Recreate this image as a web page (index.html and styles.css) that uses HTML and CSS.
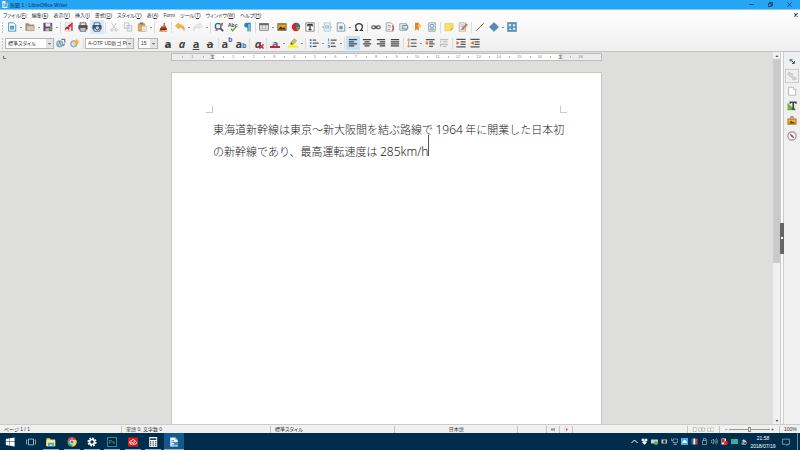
FILE: index.html
```
<!DOCTYPE html>
<html lang="ja">
  <head>
    <meta charset="utf-8" />
    <title>無題 1 - LibreOffice Writer</title>
    <link rel="stylesheet" href="styles.css" />
  </head>
  <body>
    <header class="titlebar">
      <svg class="app-icon" viewBox="0 0 12 12"><path d="M2 0h6l3 3v9H2z" fill="#e8f4fb" /><path d="M8 0l3 3H8z" fill="#17587f" /><path d="M3 5h7M3 7h3M3 9h7" stroke="#1c6ea4" /><path d="M7 6h3v2H7z" fill="#2a87b8" /></svg>
      <h1>無題 1 - LibreOffice Writer</h1>
      <div class="window-buttons">
        <button aria-label="最小化"><svg viewBox="0 0 12 12"><path d="M1 6h10" /></svg></button>
        <button aria-label="元に戻す"><svg viewBox="0 0 12 12"><path d="M1 4h7v7H1zM4 4V1h7v7H8" /></svg></button>
        <button aria-label="閉じる"><svg viewBox="0 0 12 12"><path d="M1 1l10 10M11 1L1 11" /></svg></button>
      </div>
    </header>

    <div class="chrome">
      <nav class="menubar">
        <a href="#">ファイル(<u>F</u>)</a>
        <a href="#">編集(<u>E</u>)</a>
        <a href="#">表示(<u>V</u>)</a>
        <a href="#">挿入(<u>I</u>)</a>
        <a href="#">書式(<u>O</u>)</a>
        <a href="#">スタイル(<u>Y</u>)</a>
        <a href="#">表(<u>A</u>)</a>
        <a href="#">Form</a>
        <a href="#">ツール(<u>T</u>)</a>
        <a href="#">ウィンドウ(<u>W</u>)</a>
        <a href="#">ヘルプ(<u>H</u>)</a>
        <button class="close-doc" aria-label="文書を閉じる"><svg viewBox="0 0 10 10"><path d="M1 1l8 8M9 1L1 9" stroke="#444" stroke-width="3" /></svg></button>
      </nav>

      <div class="toolbar">
        <span class="handle"></span>
        <button class="tool" aria-label="新規"><svg viewBox="0 0 24 24"><path d="M4 2h12l5 5v15H4z" fill="#fff" stroke="#2a87b8" stroke-width="2" /><path d="M7 9h10v9H7z" fill="#3592c4" /><path d="M8 12h5M8 15h8" stroke="#fff" /></svg></button>
        <button class="drop" aria-label="新規メニュー"></button>
        <button class="tool" aria-label="開く"><svg viewBox="0 0 24 24"><path d="M1 21V3h8l2 3h11v15z" fill="#9c8b75" /><path d="M4 21V9h18v12z" fill="#dac7aa" stroke="#93816b" /></svg></button>
        <button class="drop" aria-label="開くメニュー"></button>
        <button class="tool" aria-label="保存"><svg viewBox="0 0 24 24"><path d="M1 2h21v20H1z" fill="#64456f" /><path d="M6 3h12v8H6z" fill="#ece5ef" /><path d="M6 15h9v7H6z" fill="#c3b5c9" /><path d="M14 15h3v-5h4v5h3l-5 6z" fill="#6cbb35" /></svg></button>
        <button class="drop" aria-label="保存メニュー"></button>
        <span class="sep"></span>
        <button class="tool" aria-label="PDF"><svg viewBox="0 0 24 24"><path d="M3 2h17v20H3z" fill="#f6f6f6" stroke="#aaa" /><path d="M21 1L9 9l6 4zM2 20c0-8 5-10 10-10 2 4 1 8 0 12-1-6-5-7-10-2z" fill="#cc2229" /><path d="M19 2v19" stroke="#cc2229" stroke-width="3" /></svg></button>
        <button class="tool" aria-label="印刷"><svg viewBox="0 0 24 24"><path d="M5 2h14v6H5z" fill="#fff" stroke="#444" stroke-width="2" /><rect x="1" y="7" width="22" height="11" rx="2" fill="#555" /><path d="M5 13h14v9H5z" fill="#f2f2f2" stroke="#444" stroke-width="2" /><path d="M7 17h10" stroke="#777" stroke-width="2" /></svg></button>
        <button class="tool hovered" aria-label="印刷プレビュー"><svg viewBox="0 0 24 24"><path d="M5 2h14v6H5z" fill="#fff" stroke="#31465c" stroke-width="2" /><rect x="1" y="7" width="22" height="11" rx="2" fill="#40536a" /><path d="M5 13h14v9H5z" fill="#fff" stroke="#31465c" stroke-width="2" /><circle cx="13" cy="14" r="5" fill="#aed7f2" stroke="#2c4054" stroke-width="2" /></svg></button>
        <span class="sep"></span>
        <button class="tool faded" aria-label="切り取り"><svg viewBox="0 0 24 24"><path d="M6 2l9 14M18 2L9 16" stroke="#888" stroke-width="2" /><circle cx="7" cy="19" r="3" fill="none" stroke="#888" stroke-width="2" /><circle cx="17" cy="19" r="3" fill="none" stroke="#888" stroke-width="2" /></svg></button>
        <button class="tool faded" aria-label="コピー"><svg viewBox="0 0 24 24"><path d="M3 2h11v13H3zM10 8h11v14H10z" fill="#eee" stroke="#888" stroke-width="2" /><path d="M13 13h6M13 17h6" stroke="#888" /></svg></button>
        <button class="tool" aria-label="貼り付け"><svg viewBox="0 0 24 24"><path d="M3 4h16v18H3z" fill="#dfa653" stroke="#b77b31" /><path d="M7 1h8v5H7z" fill="#777" /><path d="M11 10h11v12H11z" fill="#fff" stroke="#888" /><path d="M13 14h7M13 18h7" stroke="#999" /></svg></button>
        <button class="drop" aria-label="貼り付けメニュー"></button>
        <span class="sep"></span>
        <button class="tool" aria-label="書式のコピー"><svg viewBox="0 0 24 24"><path d="M13 2h4v9h-4z" fill="#b57a50" /><path d="M8 10h11l2 6H6z" fill="#bb4734" /><path d="M5 15h16v4l-17 2z" fill="#7e2519" /><path d="M3 22h19" stroke="#e69832" stroke-width="3" /></svg></button>
        <span class="sep"></span>
        <button class="tool" aria-label="元に戻す"><svg viewBox="0 0 24 24"><path d="M1 9l8-7v4c10 0 15 5 13 15-2-6-6-8-13-8v4z" fill="#f0b849" stroke="#d2902d" /></svg></button>
        <button class="drop" aria-label="履歴"></button>
        <button class="tool faded" aria-label="やり直し"><svg viewBox="0 0 24 24"><path d="M23 9l-8-7v4C5 6 0 11 2 21c2-6 6-8 13-8v4z" fill="#ddd" stroke="#999" /></svg></button>
        <button class="drop" aria-label="やり直し履歴"></button>
        <span class="sep"></span>
        <button class="tool" aria-label="検索と置換"><svg viewBox="0 0 24 24"><circle cx="10" cy="10" r="7" fill="#dceefb" stroke="#356b94" stroke-width="3" /><path d="M15 15l7 7" stroke="#444" stroke-width="4" /><path d="M14 4l8-2-2 8" fill="#d95534" /><path d="M3 22l2-6 5 4z" fill="#d95534" /></svg></button>
        <button class="tool" aria-label="スペルチェック"><svg viewBox="0 0 24 24"><text x="0" y="11" class="icon-abc">Abc</text><path d="M7 16l4 5 9-10" fill="none" stroke="#539d38" stroke-width="3" /></svg></button>
        <button class="tool" aria-label="編集記号"><svg viewBox="0 0 24 24"><path d="M12 2a6 5 0 0 0 0 11h1v10h3V5h2v18h3V2z" fill="#2684bc" /></svg></button>
        <span class="sep"></span>
        <button class="tool" aria-label="表"><svg viewBox="0 0 24 24"><path d="M1 4h22v16H1z" fill="#fff" stroke="#777" stroke-width="2" /><path d="M1 3h22v5H1z" fill="#666" /><path d="M8 4v16M16 4v16M1 12h22M1 16h22" stroke="#777" /></svg></button>
        <button class="drop" aria-label="表メニュー"></button>
        <button class="tool" aria-label="画像"><svg viewBox="0 0 24 24"><path d="M1 3h22v18H1z" fill="#765a27" /><path d="M3 6h18v12H3z" fill="#e4a52c" /><path d="M3 18l6-8 5 5 3-3 4 6z" fill="#3e3620" /></svg></button>
        <button class="tool" aria-label="グラフ"><svg viewBox="0 0 24 24"><circle cx="12" cy="12" r="10" fill="#d6202b" /><path d="M12 12V2a10 10 0 0 1 10 10z" fill="#3e6d9b" /><path d="M12 12h10a10 10 0 0 1-7 9z" fill="#69a541" /></svg></button>
        <button class="tool" aria-label="テキストボックス"><svg viewBox="0 0 24 24"><path d="M2 2h20v20H2z" fill="#fff" stroke="#777" stroke-width="2" /><path d="M6 5h12v5h-2V8h-3v9h2v2H9v-2h2V8H8v2H6z" fill="#333" stroke="#333" /></svg></button>
        <span class="sep"></span>
        <button class="tool" aria-label="改ページ"><svg viewBox="0 0 24 24"><path d="M5 2h15v7H5zM5 15h15v7H5z" fill="#e7f1f8" stroke="#7d9caf" /><path d="M1 12h22" stroke="#2c83b9" stroke-width="2" stroke-dasharray="4 2" /></svg></button>
        <button class="tool" aria-label="フィールド"><svg viewBox="0 0 24 24"><path d="M3 2h13l5 5v15H3z" fill="#f5f7f8" stroke="#7e8c96" stroke-width="2" /><path d="M8 10h8v7H8z" fill="#5d9abd" /><path d="M10 8v11M14 8v11" stroke="#5d9abd" /></svg></button>
        <button class="drop" aria-label="フィールドメニュー"></button>
        <button class="tool" aria-label="特殊文字"><svg viewBox="0 0 24 24"><path d="M2 20h6C1 13 3 4 12 4s11 9 4 16h6" fill="none" stroke="#333" stroke-width="3" /></svg></button>
        <span class="sep"></span>
        <button class="tool" aria-label="ハイパーリンク"><svg viewBox="0 0 24 24"><rect x="2" y="9" width="9" height="7" rx="3" fill="none" stroke="#666" stroke-width="3" /><rect x="13" y="9" width="9" height="7" rx="3" fill="none" stroke="#666" stroke-width="3" /><path d="M8 12h8" stroke="#333" stroke-width="2" /></svg></button>
        <button class="tool" aria-label="脚注"><svg viewBox="0 0 24 24"><path d="M3 2h12l5 5v15H3z" fill="#fafafa" stroke="#8f979c" stroke-width="2" /><path d="M6 8h8M6 12h9M6 18h6" stroke="#999" stroke-width="2" /><path d="M17 9c4 2 4 8 0 11" fill="none" stroke="#d33b36" stroke-width="3" /></svg></button>
        <button class="tool" aria-label="文末脚注"><svg viewBox="0 0 24 24"><path d="M2 4h16v16H2z" fill="#fafafa" stroke="#8f979c" stroke-width="2" /><path d="M9 8h12v9H9z" fill="#d5e4ee" stroke="#4d7895" stroke-width="2" /><path d="M4 8h4M4 12h4M4 16h4" stroke="#888" /></svg></button>
        <button class="tool" aria-label="ブックマーク"><svg viewBox="0 0 24 24"><path d="M5 2h9v19l-5-4-4 4z" fill="#e97a20" /><path d="M15 3l2 4h5l-4 3 1 5-4-3-5 3 2-5-4-3h5z" fill="#f5bd45" /></svg></button>
        <button class="tool" aria-label="相互参照"><svg viewBox="0 0 24 24"><path d="M4 2h16v20H4z" fill="#eef2f5" stroke="#8a9aa6" stroke-width="2" /><path d="M8 6h8v6H8zM8 15h8v4H8z" fill="#fff" stroke="#6f94ae" stroke-width="2" /></svg></button>
        <span class="sep"></span>
        <button class="tool" aria-label="コメント"><svg viewBox="0 0 24 24"><path d="M2 3h20v12l-6 6H2z" fill="#f9df66" stroke="#d6b93d" /><path d="M22 15h-6v6z" fill="#c7a72d" /></svg></button>
        <button class="tool" aria-label="変更の記録"><svg viewBox="0 0 24 24"><path d="M3 2h15v20H3z" fill="#f7f7f7" stroke="#aaa" stroke-width="2" /><path d="M6 7h9M6 11h7M6 18h10" stroke="#aaa" stroke-width="2" /><path d="M9 18l2-5L20 4l3 3-9 9z" fill="#e17650" stroke="#96543e" /></svg></button>
        <span class="sep"></span>
        <button class="tool" aria-label="線"><svg viewBox="0 0 24 24"><path d="M3 21L21 3" stroke="#555" stroke-width="2" /></svg></button>
        <button class="tool" aria-label="図形"><svg viewBox="0 0 24 24"><path d="M12 1l11 11-11 11L1 12z" fill="#4d8cc1" stroke="#2c689c" /></svg></button>
        <button class="drop" aria-label="図形メニュー"></button>
        <button class="tool" aria-label="描画機能"><svg viewBox="0 0 24 24"><path d="M1 1h22v22H1z" fill="#5c91bb" stroke="#35719f" /><path d="M4 5h6v5H4zM14 14h6v5h-6z" fill="#cae1f2" /><circle cx="17" cy="8" r="3" fill="#cae1f2" /><path d="M4 19l3-6 4 6z" fill="#cae1f2" /></svg></button>
      </div>

      <div class="toolbar">
        <span class="handle"></span>
        <select class="combo" aria-label="段落スタイル"><option>標準スタイル</option></select>
        <button class="tool" aria-label="スタイルの更新"><svg viewBox="0 0 24 24"><circle cx="9" cy="14" r="7" fill="#cfe0ea" stroke="#7da3bb" stroke-width="3" /><path d="M6 18l3-9 3 9" fill="none" stroke="#4d8bb2" stroke-width="2" /><path d="M13 3h8v8M21 14l-5 5" fill="none" stroke="#777" stroke-width="3" /></svg></button>
        <button class="tool" aria-label="新規スタイル"><svg viewBox="0 0 24 24"><circle cx="9" cy="14" r="7" fill="#cfe0ea" stroke="#8baabc" stroke-width="3" /><path d="M16 1l2 5 5 1-4 4 1 5-5-3-4 3 1-6-4-3 6-1z" fill="#f2b42f" /></svg></button>
        <span class="sep"></span>
        <select class="combo" aria-label="フォント名"><option>A-OTF UD新ゴ Pr6N</option></select>
        <select class="combo size" aria-label="フォントサイズ"><option>15</option></select>
        <button class="tool letter" aria-label="太字"><b>a</b></button>
        <button class="tool letter" aria-label="斜体"><i>a</i></button>
        <button class="tool letter" aria-label="下線"><u>a</u></button>
        <button class="tool letter" aria-label="取り消し線"><s>a</s></button>
        <span class="sep"></span>
        <button class="tool letter" aria-label="上付き">a<sup>b</sup></button>
        <button class="tool letter" aria-label="下付き">a<sub>b</sub></button>
        <span class="sep"></span>
        <button class="tool letter" aria-label="書式のクリア"><i>a</i><svg class="clear-mark" viewBox="0 0 10 10"><path d="M1 1l8 8M9 1L1 9" stroke="#d8232a" stroke-width="3" /></svg></button>
        <span class="sep"></span>
        <button class="tool letter font-color" aria-label="フォントの色">a</button>
        <button class="drop" aria-label="フォントの色メニュー"></button>
        <button class="tool" aria-label="ハイライト"><svg viewBox="0 0 24 24"><path d="M7 11l8-9 6 4-8 9-5 2z" fill="#d7bf36" stroke="#777" /><path d="M5 15l3-4 4 4z" fill="#444" /><path d="M0 18h24v5H0z" fill="#fff000" /></svg></button>
        <button class="drop" aria-label="ハイライトメニュー"></button>
        <span class="sep"></span>
        <button class="tool" aria-label="箇条書き"><svg viewBox="0 0 24 24"><path d="M9 5h8M9 12h14M9 20h9" stroke="#555" stroke-width="3" /><path d="M2 5h4M2 12h4M2 20h4" stroke="#3779a5" stroke-width="4" /></svg></button>
        <button class="drop" aria-label="箇条書きメニュー"></button>
        <button class="tool" aria-label="番号付け"><svg viewBox="0 0 24 24"><path d="M9 5h14M9 12h10M9 20h12" stroke="#555" stroke-width="3" /><path d="M4 1v7M2 12h4M2 18h4v4H2" fill="none" stroke="#3779a5" stroke-width="2" /></svg></button>
        <button class="drop" aria-label="番号付けメニュー"></button>
        <span class="sep"></span>
        <button class="tool active" aria-label="左揃え"><svg viewBox="0 0 24 24"><path d="M2 4h20M2 9h13M2 14h20M2 19h13" stroke="#444" stroke-width="3" /></svg></button>
        <button class="tool" aria-label="中央揃え"><svg viewBox="0 0 24 24"><path d="M2 4h20M6 9h12M2 14h20M6 19h12" stroke="#444" stroke-width="3" /></svg></button>
        <button class="tool" aria-label="右揃え"><svg viewBox="0 0 24 24"><path d="M2 4h20M9 9h13M2 14h20M9 19h13" stroke="#444" stroke-width="3" /></svg></button>
        <button class="tool" aria-label="両端揃え"><svg viewBox="0 0 24 24"><path d="M2 4h20M2 9h20M2 14h20M2 19h20" stroke="#444" stroke-width="3" /></svg></button>
        <span class="sep"></span>
        <button class="tool" aria-label="行間"><svg viewBox="0 0 24 24"><path d="M9 4h14M9 12h14M9 20h14" stroke="#666" stroke-width="3" /><path d="M4 2v20M1 6l3-4 3 4M1 18l3 4 3-4" fill="none" stroke="#d9823d" stroke-width="2" /></svg></button>
        <button class="drop" aria-label="行間メニュー"></button>
        <button class="tool" aria-label="段落間隔を広げる"><svg viewBox="0 0 24 24"><path d="M2 4h21M10 9h9M10 14h13M10 20h9" stroke="#555" stroke-width="3" /><path d="M1 12h7M5 8v8" stroke="#dc7934" stroke-width="3" /></svg></button>
        <button class="tool faded" aria-label="段落間隔を狭める"><svg viewBox="0 0 24 24"><path d="M2 4h20M10 9h10M2 15h20M10 20h8M4 7v4M4 17v4" stroke="#888" stroke-width="3" /></svg></button>
        <span class="sep"></span>
        <button class="tool" aria-label="インデントを増やす"><svg viewBox="0 0 24 24"><path d="M1 3h22M11 9h12M11 15h12M1 21h22" stroke="#555" stroke-width="3" /><path d="M1 7l8 5-8 5z" fill="#e36b25" /></svg></button>
        <button class="tool" aria-label="インデントを減らす"><svg viewBox="0 0 24 24"><path d="M1 3h22M11 9h12M11 15h12M1 21h22" stroke="#555" stroke-width="3" /><path d="M9 7l-8 5 8 5z" fill="#e36b25" /></svg></button>
      </div>
    </div>

    <main class="workspace">
      <section class="document">
        <div class="ruler-row">
          <span class="tab-stop"></span>
          <div class="ruler">
            <span>1</span><span class="marker"></span><span>1</span><span>2</span><span>3</span><span>4</span><span>5</span><span>6</span><span>7</span><span>8</span><span>9</span><span>10</span><span>11</span><span>12</span><span>13</span><span>14</span><span>15</span><span>16</span><span class="marker"></span><span>18</span>
          </div>
        </div>
        <article class="page">
          <div class="page-corners"><span></span><span></span></div>
          <p>東海道新幹線は東京～新大阪間を結ぶ路線で <span class="latin">1964</span> 年に開業した日本初<br />の新幹線であり、最高運転速度は <span class="latin">285km/h</span><span class="caret"></span></p>
        </article>
      </section>

      <div class="scrollbar">
        <button aria-label="上へ"><svg viewBox="0 0 8 8"><path d="M1 6l3-4 3 4z" /></svg></button>
        <div class="track"><div class="thumb"></div></div>
        <button aria-label="下へ"><svg viewBox="0 0 8 8"><path d="M1 2l3 4 3-4z" /></svg></button>
      </div>

      <div class="splitter"><button aria-label="サイドバーを隠す"></button></div>

      <aside class="sidebar">
        <button class="tab menu" aria-label="設定"><svg viewBox="0 0 24 24"><path d="M6 7h7v6H6z" fill="#6e8191" /><path d="M12 12l5 5M18 12v6h-6" fill="none" stroke="#394e62" stroke-width="2" /></svg></button>
        <button class="tab selected" aria-label="プロパティ"><svg viewBox="0 0 24 24"><path d="M2 6c0-3 3-4 5-3v4l3 1 2-3c2 3 1 5 0 6l5 4c3-1 6 2 5 5l-4-1-1 3c-3 0-4-3-4-5l-6-5c-3 0-5-3-5-6z" fill="#ddd" stroke="#999" /></svg></button>
        <button class="tab" aria-label="ページ"><svg viewBox="0 0 24 24"><path d="M4 3h11l6 6v13H4z" fill="#fff" stroke="#aaa" stroke-width="2" /><path d="M15 3v6h6" fill="#ddd" stroke="#aaa" /></svg></button>
        <button class="tab" aria-label="スタイル"><svg viewBox="0 0 24 24"><path d="M1 4v18h20z" fill="#6eb944" /><path d="M6 1h17v6h-3V5h-3v13h3v3h-9v-3h2V5H9v2H6z" fill="#444" /></svg></button>
        <button class="tab" aria-label="ギャラリー"><svg viewBox="0 0 24 24"><path d="M9 6V2h6v4" fill="none" stroke="#555" stroke-width="2" /><path d="M1 6h22v15H1z" fill="#c47e16" /><path d="M4 9h16v9H4z" fill="#eeb93b" /><path d="M5 18l5-7 4 4 2-2 3 5z" fill="#544a2c" /></svg></button>
        <button class="tab" aria-label="ナビゲーター"><svg viewBox="0 0 24 24"><circle cx="12" cy="12" r="10" fill="#f8f8f8" stroke="#999" stroke-width="3" /><path d="M6 6l8 4-4 4z" fill="#cf3b3f" /><path d="M18 18l-8-4 4-4z" fill="#47698e" /></svg></button>
      </aside>
    </main>

    <footer class="statusbar">
      <span class="pages">ページ 1 / 1</span>
      <span class="words">単語 0, 文字数 0</span>
      <span class="style">標準スタイル</span>
      <span class="language">日本語</span>
      <span class="insert"></span>
      <span class="selection"><svg viewBox="0 0 12 12"><path d="M0 3h8v6H0z" fill="#888" /><path d="M10 1v10" stroke="#666" stroke-width="2" /></svg></span>
      <span class="signature"><svg viewBox="0 0 12 12"><path d="M1 1h7v10H1z" fill="#fff" stroke="#aaa" /><circle cx="8" cy="6" r="3" fill="#c9505f" /></svg></span>
      <span class="info"></span>
      <span class="views">
        <svg viewBox="0 0 12 12"><path d="M3 1h7v10H3z" fill="#fff" stroke="#777" /></svg>
        <svg viewBox="0 0 18 12"><path d="M2 2h6v8H2zM10 2h6v8h-6z" fill="#fff" stroke="#777" /></svg>
        <svg viewBox="0 0 18 12"><path d="M1 3l4-1 4 1 4-1 4 1v7H1zM9 3v7" fill="#fff" stroke="#777" /></svg>
      </span>
      <span class="zoom"><button aria-label="縮小">−</button><input type="range" min="20" max="180" value="100" aria-label="ズーム" /><button aria-label="拡大">+</button></span>
      <span class="percent">100%</span>
    </footer>

    <div class="taskbar">
      <div class="apps">
        <button aria-label="スタート"><svg viewBox="0 0 24 24"><path d="M2 5l9-2v8H2zM12 3l11-2v10H12zM2 12h9v9l-9-2zM12 12h11v11l-11-2z" fill="#fff" /></svg></button>
        <button aria-label="タスクビュー"><svg viewBox="0 0 24 24"><path d="M6 5h12v14H6zM3 7H1v10h2M21 7h2v10h-2" fill="none" stroke="#b5c4cf" stroke-width="2" /></svg></button>
        <button class="running" aria-label="エクスプローラー"><svg viewBox="0 0 24 24"><path d="M1 3h8l2 3h11v16H1z" fill="#f4cf62" /><path d="M1 8h21v14H1z" fill="#ffe89b" /><path d="M5 22v-8h14v8h-4v-4H9v4z" fill="#3ba2db" /></svg></button>
        <button class="running" aria-label="Chrome"><svg viewBox="0 0 24 24"><circle cx="12" cy="12" r="11" fill="#4aaa51" /><path d="M2 6a11 11 0 0 1 20 1H12l-4 7z" fill="#de4a39" /><path d="M22 7a11 11 0 0 1-11 16l5-9-2-7z" fill="#fbcb3a" /><circle cx="12" cy="12" r="5" fill="#4285e8" stroke="#fff" stroke-width="2" /></svg></button>
        <button class="running" aria-label="設定"><svg viewBox="0 0 24 24"><circle cx="12" cy="12" r="9" fill="none" stroke="#fff" stroke-width="4" stroke-dasharray="4 3" /><circle cx="12" cy="12" r="6" fill="none" stroke="#fff" stroke-width="4" /></svg></button>
        <button class="running" aria-label="Photoshop"><svg viewBox="0 0 24 24"><path d="M1 1h22v22H1z" fill="#05202d" stroke="#20b7d8" stroke-width="2" /><text x="4" y="17" class="icon-ps">Ps</text></svg></button>
        <button class="running" aria-label="Creative Cloud"><svg viewBox="0 0 24 24"><path d="M0 1h24v22H0z" fill="#d51a1f" /><path d="M8 17c-6 0-6-8 0-8 2-4 8-4 9 1 5 1 5 7 0 7H8c-3-1-2-5 0-5s3 3 5 3 4-5 0-5" fill="none" stroke="#fff" stroke-width="2" /></svg></button>
        <button class="running" aria-label="電卓"><svg viewBox="0 0 24 24"><path d="M3 0h19v24H3z" fill="#fff" /><path d="M5 3h15v4H5zM5 10h3v3H5zM11 10h3v3h-3zM17 10h3v3h-3zM5 15h3v3H5zM11 15h3v3h-3zM17 15h3v3h-3zM5 20h3v2H5zM11 20h3v2h-3zM17 20h3v2h-3z" fill="#21445e" /></svg></button>
        <button class="running current" aria-label="LibreOffice Writer"><svg viewBox="0 0 24 24"><path d="M3 1h12l6 6v16H3z" fill="#f2f7fa" /><path d="M15 1l6 6h-6z" fill="#8bb9d4" /><path d="M6 9h6M6 13h12M6 19h12" stroke="#287cae" stroke-width="2" /><path d="M12 12h10v8H12z" fill="#438eb8" /></svg></button>
      </div>
      <div class="tray">
        <button aria-label="隠れているインジケーター"><svg viewBox="0 0 14 14"><path d="M1 10l6-6 6 6" fill="none" stroke="#fff" stroke-width="2" /></svg></button>
        <button aria-label="Dropbox"><svg viewBox="0 0 14 14"><path d="M4 1l3 3-3 3-3-3zM10 1l3 3-3 3-3-3zM7 6l4 3-4 4-4-4z" fill="#fff" stroke="#fff" /></svg></button>
        <button aria-label="デバイス"><svg viewBox="0 0 14 14"><path d="M0 3h14v8H0z" fill="#c7d5cf" /><circle cx="10" cy="10" r="4" fill="#58b957" /></svg></button>
        <button aria-label="グラフィック"><svg viewBox="0 0 14 14"><path d="M1 3h11v8H1z" fill="#c8c8c8" /><circle cx="7" cy="7" r="3" fill="#333" /></svg></button>
        <button aria-label="ネットワーク"><svg viewBox="0 0 14 14"><path d="M4 2h9v7H4zM1 1v4h3M8 9v4M5 13h7" fill="none" stroke="#ddd" /></svg></button>
        <button aria-label="クラウド"><svg viewBox="0 0 14 14"><path d="M0 0h14v14H0z" fill="#4aa9ee" /><path d="M2 10c0-4 3-3 3-5 4-3 6 2 7 5z" fill="#fff" /></svg></button>
        <button aria-label="言語"><svg viewBox="0 0 14 14"><path d="M1 1h5v12H1z" fill="#276ec2" /><path d="M5 1h4v12H5z" fill="#fff" /><path d="M9 1h4v12H9z" fill="#df3d36" /></svg></button>
        <button aria-label="USB"><svg viewBox="0 0 14 14"><path d="M5 5V1h5v4M3 5h8v8H3z" fill="none" stroke="#ddd" /></svg></button>
        <button aria-label="音量"><svg viewBox="0 0 14 14"><path d="M0 5h2l3-3v10L2 9H0zM7 5q2 2 0 4M9 3q4 4 0 8M11 1q5 6 0 12" fill="none" stroke="#ddd" /></svg></button>
        <button aria-label="セキュリティ"><svg viewBox="0 0 14 14"><path d="M1 1h9v12H1z" fill="#f5f5f5" /><path d="M2 2h5v7H2z" fill="#d71f28" /><circle cx="10" cy="10" r="4" fill="#e62129" /></svg></button>
        <button aria-label="モニター"><svg viewBox="0 0 14 14"><path d="M0 2h14v10H0z" fill="#20b8a9" /><path d="M1 3h5v3H1z" fill="#de5b4c" /></svg></button>
        <button aria-label="入力モード">あ</button>
      </div>
      <div class="clock"><time>21:58</time><time>2018/07/19</time></div>
      <button class="notice" aria-label="通知"><svg viewBox="0 0 14 14"><path d="M1 2h12v9H9v2l-3-2H1z" fill="none" stroke="#ddd" /></svg></button>
    </div>
  </body>
</html>
```
FILE: styles.css
```
:root {
  --title: #27a5f5;
  --workspace: #dededd;
  --panel: #f0f0f0;
  --line: #c3c3c3;
  --text: #333333;
  --taskbar: #002d4b;
}

* {
  margin: 0;
  padding: 0;
  box-sizing: border-box;
}

body {
  height: 100vh;
  display: flex;
  flex-direction: column;
  overflow: hidden;
  font-family: "Liberation Sans", "Noto Sans CJK JP", sans-serif;
  font-size: 5px;
  font-feature-settings: "palt";
  line-height: 8px;
  color: var(--text);
}

button {
  display: flex;
  align-items: center;
  justify-content: center;
  border: none;
  background: none;
  color: inherit;
  font: inherit;
}

a {
  color: inherit;
  text-decoration: none;
}

svg {
  display: block;
}

.titlebar {
  display: flex;
  align-items: center;
  height: 10px;
  flex-shrink: 0;
  padding: 0 1px;
  background: var(--title);
  border-bottom: 1px solid #7fcbfa;
  color: #0d3554;
}

.app-icon {
  width: 7px;
  height: 7px;
  margin-right: 2px;
}

.titlebar h1 {
  flex: 1;
  font-size: 5px;
  font-weight: normal;
}

.window-buttons {
  display: flex;
}

.window-buttons button {
  width: 19px;
  height: 9px;
}

.window-buttons svg {
  width: 5px;
  height: 5px;
  fill: none;
  stroke: #0d3554;
  stroke-width: 2;
}

.chrome {
  flex-shrink: 0;
  background: linear-gradient(#ffffff, #efefef);
  border-bottom: 1px solid var(--line);
}

.menubar {
  display: flex;
  align-items: center;
  gap: 5px;
  height: 9px;
  padding: 0 2px 0 3px;
}

.menubar u {
  text-decoration-thickness: 1px;
}

.close-doc {
  margin-left: auto;
}

.close-doc svg {
  width: 4px;
  height: 4px;
}

.toolbar {
  display: flex;
  align-items: center;
  height: 16px;
}

.handle {
  width: 4px;
  height: 11px;
  margin-right: 1px;
  background: linear-gradient(#c4c4c4 2px, transparent 2px) 2px 0 / 1px 3px repeat-y;
}

.tool {
  position: relative;
  width: 14px;
  height: 14px;
  flex-shrink: 0;
}

.tool svg {
  width: 10px;
  height: 10px;
  fill: none;
}

.tool.active {
  background: #c5e1f7;
}

.tool.hovered {
  background: #d9ebfa;
}

.faded {
  opacity: 0.5;
}

.drop {
  width: 4px;
  height: 14px;
  flex-shrink: 0;
}

.drop::after {
  content: "";
  border: 1px solid transparent;
  border-top-color: #333333;
  border-bottom: none;
}

.sep {
  width: 1px;
  height: 11px;
  margin: 0 1px;
  flex-shrink: 0;
  background: #dcdcdc;
}

.combo {
  appearance: none;
  width: 49px;
  height: 11px;
  padding: 0 6px 0 2px;
  border: 1px solid #b5b5b5;
  border-radius: 0;
  background: linear-gradient(#888888, #888888) calc(100% - 2px) 4px / 3px 1px no-repeat,
    linear-gradient(#999999, #999999) calc(100% - 3px) 5px / 1px 1px no-repeat,
    linear-gradient(#e4e4e4, #e4e4e4) 100% 0 / 7px 100% no-repeat, #ffffff;
  color: var(--text);
  font: inherit;
}

.combo.size {
  width: 20px;
  margin: 0 3px 0 4px;
}

.icon-abc {
  font-size: 12px;
  font-weight: bold;
  fill: #444444;
}

.icon-ps {
  font-size: 13px;
  fill: #20b7d8;
}

.letter {
  font-family: "Open Sans", sans-serif;
  font-size: 11px;
  font-weight: bold;
  line-height: 11px;
  color: #444444;
}

.letter u,
.letter s {
  text-decoration-thickness: 1px;
}

.letter sup,
.letter sub {
  font-size: 7px;
  line-height: 8px;
  color: #3779a5;
}

.letter sup {
  align-self: flex-start;
}

.letter sub {
  align-self: flex-end;
}

.tool .clear-mark {
  position: absolute;
  right: 1px;
  bottom: 1px;
  width: 5px;
  height: 5px;
}

.font-color {
  color: #3d6f9a;
}

.font-color::after {
  content: "";
  position: absolute;
  left: 2px;
  right: 2px;
  bottom: 2px;
  height: 2px;
  background: #cf2027;
}

.workspace {
  display: flex;
  flex: 1;
  min-height: 0;
  background: var(--workspace);
}

.document {
  display: flex;
  flex-direction: column;
  align-items: center;
  flex: 1;
}

.ruler-row {
  position: relative;
  display: flex;
  justify-content: center;
  width: 100%;
  padding: 1px 0 11px;
}

.tab-stop {
  position: absolute;
  left: 3px;
  top: 4px;
  width: 3px;
  height: 3px;
  border: solid #777777;
  border-width: 0 0 1px 1px;
}

.ruler {
  display: flex;
  width: calc(56% - 2px);
  height: 8px;
  padding: 0 10px;
  border: 1px solid #bdbdbd;
  background: linear-gradient(90deg, #ececec 41px, #ffffff 41px calc(100% - 41px), #ececec calc(100% - 41px));
  font-size: 4px;
  line-height: 6px;
  color: #888888;
}

.ruler span {
  flex: 1 1 0;
  text-align: center;
  background: linear-gradient(#bbbbbb, #bbbbbb) 0 2px / 1px 2px no-repeat;
}

.ruler .marker::after {
  content: "⧗";
  font-family: "DejaVu Sans", sans-serif;
  font-size: 7px;
  color: #999999;
}

.page {
  width: calc(56% - 2px);
  flex: 1;
  padding: 33px 41px 0;
  background: #ffffff;
  border: 1px solid #c6c6c6;
  border-bottom: none;
  font-family: "Noto Sans CJK JP", sans-serif;
  font-size: 11px;
  font-weight: 300;
  font-feature-settings: normal;
  line-height: 22px;
  color: #222222;
}

.page p {
  margin-top: 5px;
  white-space: nowrap;
}

.page-corners {
  display: flex;
  justify-content: space-between;
  margin: 0 -7px;
}

.page-corners span {
  width: 7px;
  height: 7px;
  border: solid #c8c8c8;
  border-width: 0 1px 1px 0;
}

.page-corners span:last-child {
  border-width: 0 0 1px 1px;
}

.latin {
  font-family: "Noto Sans", sans-serif;
  font-size: 12px;
  line-height: 12px;
}

.caret {
  display: inline-block;
  width: 1px;
  height: 21px;
  margin-top: -5px;
  vertical-align: top;
  background: #555555;
}

.scrollbar {
  display: flex;
  flex-direction: column;
  width: 7px;
  background: #f0f0f0;
}

.scrollbar button {
  height: 7px;
}

.scrollbar svg {
  width: 4px;
  height: 4px;
  fill: #555555;
}

.track {
  flex: 1;
}

.thumb {
  height: 57%;
  background: #cacaca;
}

.splitter {
  display: flex;
  align-items: center;
  width: 4px;
  background: #fafafa;
  border: solid #cccccc;
  border-width: 0 1px;
}

.splitter button {
  width: 4px;
  height: 31px;
  margin: 0 -1px;
  flex-shrink: 0;
  background: #666666;
}

.splitter button::after {
  content: "";
  width: 2px;
  height: 2px;
  background: #ffffff;
}

.sidebar {
  display: flex;
  flex-direction: column;
  align-items: center;
  gap: 1px;
  width: 16px;
  padding-top: 2px;
  background: var(--panel);
}

.tab {
  width: 14px;
  height: 14px;
}

.tab svg {
  width: 10px;
  height: 10px;
}

.tab.selected {
  border: 1px solid #cccccc;
}

.statusbar {
  display: flex;
  align-items: center;
  height: 9px;
  flex-shrink: 0;
  background: var(--panel);
  border-top: 1px solid #cccccc;
}

.statusbar > span {
  display: flex;
  align-items: center;
  height: 7px;
  padding: 0 4px;
  border-right: 1px solid #c4c4c4;
}

.statusbar svg {
  height: 5px;
}

.statusbar .pages {
  width: 122px;
}

.statusbar .words {
  flex: 151;
}

.statusbar .style {
  flex: 124;
}

.statusbar .language {
  flex: 123;
  justify-content: center;
}

.statusbar .insert {
  width: 29px;
}

.statusbar .selection {
  width: 13px;
}

.statusbar .signature {
  width: 13px;
}

.statusbar .info {
  flex: 114;
}

.statusbar .views {
  width: 32px;
  gap: 1px;
}

.statusbar .zoom {
  width: 60px;
}

.statusbar .percent {
  width: 20px;
  border: none;
}

.zoom button {
  width: 5px;
  height: 7px;
}

.zoom input {
  appearance: none;
  flex: 1;
  min-width: 0;
  height: 5px;
  background: linear-gradient(#999999, #999999) 0 2px / 100% 1px no-repeat;
}

.zoom input::-webkit-slider-thumb {
  appearance: none;
  width: 3px;
  height: 5px;
  background: #ffffff;
  border: 1px solid #888888;
}

.taskbar {
  display: flex;
  height: 17px;
  flex-shrink: 0;
  background: var(--taskbar);
  color: #ffffff;
}

.apps {
  display: grid;
  grid-template-columns: repeat(9, 1fr);
  width: 184px;
  margin-right: auto;
}

.apps button {
  padding: 0 2px;
}

.apps svg {
  width: 10px;
  height: 10px;
}

.running {
  background: linear-gradient(#76b9e8, #76b9e8) center bottom / 16px 1px no-repeat;
}

.apps .current {
  background: linear-gradient(#76b9e8, #76b9e8) center bottom / 100% 1px no-repeat, #13598d;
}

.tray {
  display: flex;
}

.tray button {
  width: 10px;
  font-size: 6px;
}

.tray svg {
  width: 7px;
  height: 7px;
}

.clock {
  display: flex;
  flex-direction: column;
  justify-content: center;
  width: 28px;
  text-align: center;
  line-height: 8px;
}

.notice {
  width: 21px;
  border-right: 1px solid #6b8496;
  margin-right: 2px;
  padding-right: 3px;
}

.notice svg {
  width: 8px;
  height: 8px;
}
```
